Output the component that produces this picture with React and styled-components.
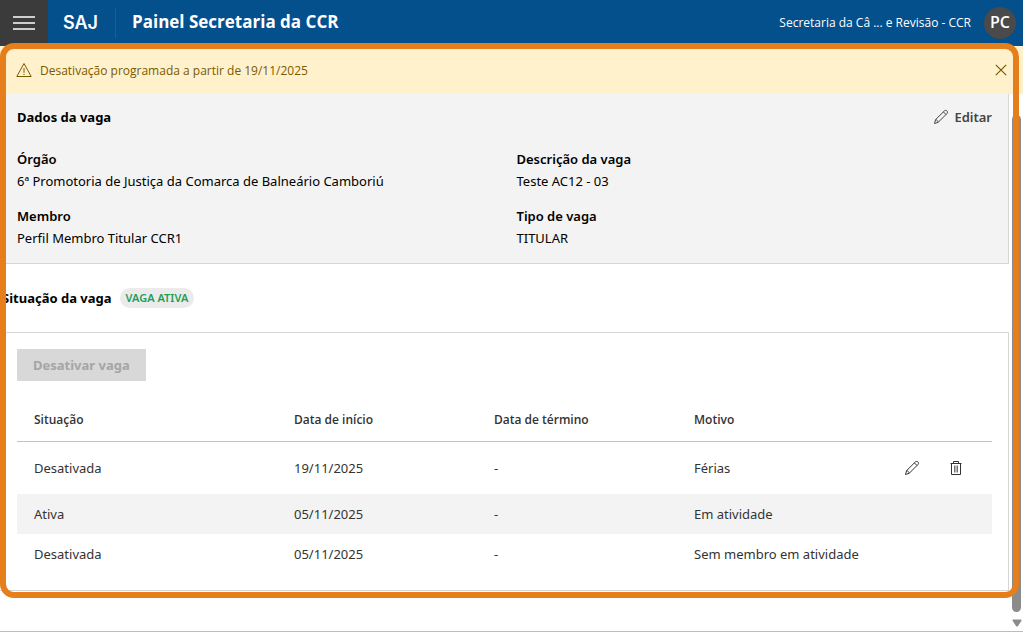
import React from "react";
import styled, { createGlobalStyle } from "styled-components";

const details = [
  { label: "Órgão", value: "6ª Promotoria de Justiça da Comarca de Balneário Camboriú" },
  { label: "Descrição da vaga", value: "Teste AC12 - 03" },
  { label: "Membro", value: "Perfil Membro Titular CCR1" },
  { label: "Tipo de vaga", value: "TITULAR" },
];

const history = [
  { status: "Desativada", start: "19/11/2025", end: "-", reason: "Férias", editable: true },
  { status: "Ativa", start: "05/11/2025", end: "-", reason: "Em atividade" },
  { status: "Desativada", start: "05/11/2025", end: "-", reason: "Sem membro em atividade" },
];

function PencilIcon() {
  return (
    <svg width="16" height="16" viewBox="0 0 16 16" fill="none" stroke="currentColor" strokeLinejoin="round">
      <path d="M1.5 14.5 2.6 10.6 11.4 1.9C12.1 1.2 13.2 1.2 13.9 1.9 14.7 2.6 14.7 3.8 13.9 4.6L5.2 13.3ZM10.4 2.9 13 5.5M2.6 10.6C3.9 10.8 4.9 11.9 5.2 13.3" />
    </svg>
  );
}

function TrashIcon() {
  return (
    <svg width="16" height="16" viewBox="0 0 16 16" fill="none" stroke="currentColor">
      <path d="M2.5 3.5H13.5M5.5 3.5V1.5H10.5V3.5M3.5 3.5V14.5H12.5V3.5" />
      <path d="M6.5 5.5V12.5M8 5.5V12.5M9.5 5.5V12.5" strokeOpacity="0.7" />
    </svg>
  );
}

function WarningIcon() {
  return (
    <svg width="16" height="16" viewBox="0 0 16 16" fill="none" stroke="currentColor">
      <path d="M8 1.5 15.2 14.5H.8ZM8 6V10.8M8 11.8V13" />
    </svg>
  );
}

function CloseIcon() {
  return (
    <svg width="12" height="12" viewBox="0 0 12 12" fill="none" stroke="currentColor" strokeWidth="1.2">
      <path d="M.8.8 11.2 11.2M11.2.8.8 11.2" />
    </svg>
  );
}

function App() {
  return (
    <Page>
      <GlobalStyle />
      <Header>
        <MenuButton type="button" aria-label="Menu">
          <svg width="22" height="14" viewBox="0 0 22 14" stroke="currentColor" strokeWidth="1.5">
            <path d="M0 1H22M0 7H22M0 13H22" />
          </svg>
        </MenuButton>
        <Logo href="#">SAJ</Logo>
        <Title>Painel Secretaria da CCR</Title>
        <Unit>Secretaria da Câ ... e Revisão - CCR</Unit>
        <Avatar type="button">PC</Avatar>
      </Header>
      <Main>
        <Notice role="status">
          <WarningIcon />
          <NoticeText>Desativação programada a partir de 19/11/2025</NoticeText>
          <IconButton type="button" aria-label="Fechar">
            <CloseIcon />
          </IconButton>
        </Notice>
        <Body>
          <Content>
            <DetailsPanel>
              <PanelHead>
                <Heading>Dados da vaga</Heading>
                <EditButton type="button">
                  <PencilIcon />
                  Editar
                </EditButton>
              </PanelHead>
              <DetailsGrid>
                {details.map((item) => (
                  <div key={item.label}>
                    <Label>{item.label}</Label>
                    <Value>{item.value}</Value>
                  </div>
                ))}
              </DetailsGrid>
            </DetailsPanel>
            <StatusBar>
              <Heading>Situação da vaga</Heading>
              <Badge>VAGA ATIVA</Badge>
            </StatusBar>
            <HistoryPanel>
              <DisableButton type="button" disabled>
                Desativar vaga
              </DisableButton>
              <Table>
                <colgroup>
                  <Col $width="260px" />
                  <Col $width="200px" />
                  <Col $width="200px" />
                  <Col />
                  <Col $width="120px" />
                </colgroup>
                <thead>
                  <tr>
                    <Th>Situação</Th>
                    <Th>Data de início</Th>
                    <Th>Data de término</Th>
                    <Th>Motivo</Th>
                    <Th aria-label="Ações" />
                  </tr>
                </thead>
                <tbody>
                  {history.map((row, index) => (
                    <Row key={index} $tall={row.editable}>
                      <Td>{row.status}</Td>
                      <Td>{row.start}</Td>
                      <Td>{row.end}</Td>
                      <Td>{row.reason}</Td>
                      <Td>
                        {row.editable && (
                          <Actions>
                            <IconButton type="button" aria-label="Editar">
                              <PencilIcon />
                            </IconButton>
                            <IconButton type="button" aria-label="Excluir">
                              <TrashIcon />
                            </IconButton>
                          </Actions>
                        )}
                      </Td>
                    </Row>
                  ))}
                </tbody>
              </Table>
            </HistoryPanel>
          </Content>
          <ScrollTrack aria-hidden="true">
            <ScrollThumb />
            <svg width="10" height="8" viewBox="0 0 10 8" fill="#8b8b8b">
              <path d="M1.2.5H8.8Q10 .8 9.3 2L6 7Q5 8 4 7L.7 2Q0 .8 1.2.5Z" />
            </svg>
          </ScrollTrack>
        </Body>
        <Highlight />
      </Main>
    </Page>
  );
}

export default App;

const smallFont = `"Open Sans", "Noto Sans", sans-serif`;

const GlobalStyle = createGlobalStyle`
  * {
    box-sizing: border-box;
  }
  body {
    margin: 0;
    background: #fff;
    color: #000;
    font-family: "Noto Sans", "Open Sans", sans-serif;
    font-size: 13px;
    line-height: 20px;
  }
  svg {
    display: block;
    flex-shrink: 0;
  }
`;

const Button = styled.button`
  padding: 0;
  border: none;
  background: none;
  color: inherit;
  font: inherit;
`;

const Page = styled.div`
  display: flex;
  flex-direction: column;
  min-height: 100vh;
`;

const Header = styled.header`
  display: flex;
  align-items: center;
  height: 46px;
  padding-right: 7px;
  background: #04508c;
  color: #fff;
  font-family: ${smallFont};
`;

const MenuButton = styled(Button)`
  display: flex;
  align-items: center;
  justify-content: center;
  width: 48px;
  height: 46px;
  background: #3b3b3b;
`;

const Logo = styled.a`
  width: 68px;
  padding-left: 15px;
  border-right: 1px solid #0c62a8;
  color: #fff;
  font-family: Inter, sans-serif;
  font-size: 18px;
  font-weight: 600;
  line-height: 30px;
  text-decoration: none;
`;

const Title = styled.h1`
  flex: 1;
  margin: 0 16px;
  padding-bottom: 2px;
  font-size: 17px;
  font-weight: 700;
  line-height: 24px;
`;

const Unit = styled.span`
  font-size: 12px;
`;

const Avatar = styled(Button)`
  width: 32px;
  height: 32px;
  margin-left: 13px;
  padding-bottom: 2px;
  border-radius: 50%;
  background: #4a4a4a;
  font-size: 16px;
  font-weight: 600;
`;

const Main = styled.main`
  position: relative;
  flex: 1;
  display: flex;
  flex-direction: column;
  border-bottom: 1px solid #b9bcc6;
`;

const Notice = styled.div`
  display: flex;
  align-items: center;
  gap: 8px;
  height: 48px;
  padding: 0 6px 0 16px;
  background: #fff1cc;
  color: #7a5a00;
`;

const NoticeText = styled.span`
  flex: 1;
  padding-top: 2px;
  font-family: ${smallFont};
  font-size: 12px;
`;

const IconButton = styled(Button)`
  display: flex;
  align-items: center;
  justify-content: center;
  width: 32px;
  height: 32px;
`;

const Body = styled.div`
  flex: 1;
  display: flex;
`;

const Content = styled.div`
  flex: 1;
  padding-bottom: 40px;
`;

const DetailsPanel = styled.section`
  padding: 7px 16px 15px 17px;
  border: solid #d6d6d6;
  border-width: 0 1px 1px 0;
  background: #f3f3f3;
`;

const PanelHead = styled.div`
  display: flex;
  align-items: center;
  justify-content: space-between;
  height: 32px;
`;

const Heading = styled.h2`
  margin: 0;
  font-size: 13px;
  font-weight: 700;
`;

const EditButton = styled(Button)`
  display: flex;
  align-items: center;
  gap: 5px;
  height: 32px;
  color: #444;
  font-weight: 600;
`;

const DetailsGrid = styled.div`
  display: grid;
  grid-template-columns: 1fr 1fr;
  gap: 15px 24px;
  margin-top: 16px;
`;

const Label = styled.div`
  margin-bottom: 2px;
  font-weight: 600;
`;

const Value = styled.div``;

const StatusBar = styled.div`
  display: flex;
  align-items: center;
  gap: 8px;
  height: 68px;
  padding-left: 2px;
`;

const Badge = styled.span`
  padding: 0 6px;
  border-radius: 10px;
  background: #ebebeb;
  color: #1f9d55;
  font-size: 11px;
  font-weight: 600;
`;

const HistoryPanel = styled.section`
  padding: 16px 16px 16px 17px;
  border: solid #d6d6d6;
  border-width: 1px 1px 1px 0;
`;

const DisableButton = styled(Button)`
  height: 32px;
  padding: 0 16px;
  background: #d8d8d8;
  color: #a5a5a5;
  font-weight: 700;
`;

const Table = styled.table`
  width: 100%;
  margin-top: 16px;
  border-collapse: separate;
  border-spacing: 0;
  table-layout: fixed;
  color: #333;
`;

const Col = styled.col`
  width: ${(props) => props.$width || "auto"};
`;

const Th = styled.th`
  height: 45px;
  padding: 2px 0 0 17px;
  border-bottom: 1px solid #c2c2c2;
  font-family: ${smallFont};
  font-size: 12px;
  font-weight: 600;
  text-align: left;
`;

const Row = styled.tr`
  height: ${(props) => (props.$tall ? "52px" : "40px")};
  &:nth-child(even) {
    background: #f3f3f3;
  }
`;

const Td = styled.td`
  padding: 0 0 0 17px;
`;

const Actions = styled.div`
  display: flex;
  justify-content: flex-end;
  gap: 12px;
  padding-right: 20px;
`;

const ScrollTrack = styled.div`
  display: flex;
  flex-direction: column;
  align-items: center;
  gap: 7px;
  width: 14px;
  padding: 21px 2px 4px 3px;
`;

const ScrollThumb = styled.div`
  flex: 1;
  width: 9px;
  border-radius: 5px;
  background: #8b8b8b;
`;

const Highlight = styled.div`
  position: absolute;
  inset: -3px 4px 33px 0;
  border: 6px solid #e67e1c;
  border-radius: 14px;
  pointer-events: none;
`;
